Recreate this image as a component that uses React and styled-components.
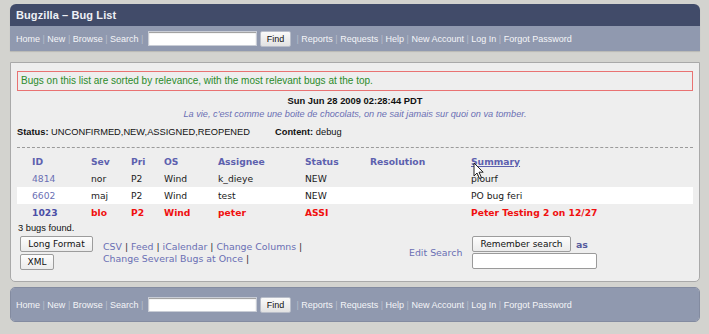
import React from 'react'
import styled, { createGlobalStyle } from 'styled-components'

const Global = createGlobalStyle`
  body {
    margin: 0;
    background: #d3d3cf;
    font-family: "Liberation Sans", Arial, sans-serif;
  }
`

const navLinks = ['Home', 'New', 'Browse', 'Search']
const navLinks2 = ['Reports', 'Requests', 'Help', 'New Account', 'Log In', 'Forgot Password']

const bugs = [
  { id: '4814', sev: 'nor', pri: 'P2', os: 'Wind', who: 'k_dieye', status: 'NEW', res: '', summary: 'piourf' },
  { id: '6602', sev: 'maj', pri: 'P2', os: 'Wind', who: 'test', status: 'NEW', res: '', summary: 'PO bug feri', even: true },
  { id: '1023', sev: 'blo', pri: 'P2', os: 'Wind', who: 'peter', status: 'ASSI', res: '', summary: 'Peter Testing 2 on 12/27', hot: true },
]

function Nav() {
  return (
    <NavBar>
      {navLinks.map((l, i) => (
        <React.Fragment key={l}>
          {i > 0 && <Sep>|</Sep>}
          <NavLink>{l}</NavLink>
        </React.Fragment>
      ))}
      <Sep>|</Sep>
      <QuickInput />
      <FindButton>Find</FindButton>
      {navLinks2.map(l => (
        <React.Fragment key={l}>
          <Sep>|</Sep>
          <NavLink>{l}</NavLink>
        </React.Fragment>
      ))}
    </NavBar>
  )
}

function Cursor() {
  return (
    <CursorIcon width="12" height="18" viewBox="0 0 12 18">
      <path d="M1 1 L1 14 L4 11 L6.5 16.5 L8.5 15.6 L6 10.2 L10.2 10.2 Z" fill="#fff" stroke="#222" strokeWidth="1" strokeLinejoin="round" />
    </CursorIcon>
  )
}

export default function App() {
  return (
    <Page>
      <Global />
      <Header>
        <TitleBar>Bugzilla – Bug List</TitleBar>
        <Nav />
      </Header>

      <Content>
        <Notice>Bugs on this list are sorted by relevance, with the most relevant bugs at the top.</Notice>
        <DateLine>Sun Jun 28 2009 02:28:44 PDT</DateLine>
        <Quote>La vie, c'est comme une boite de chocolats, on ne sait jamais sur quoi on va tomber.</Quote>
        <Criteria>
          <span><b>Status:</b> UNCONFIRMED,NEW,ASSIGNED,REOPENED</span>
          <span><b>Content:</b> debug</span>
        </Criteria>
        <Rule />

        <BugTable>
          <BugRow $head>
            <Cell>ID</Cell>
            <Cell>Sev</Cell>
            <Cell>Pri</Cell>
            <Cell>OS</Cell>
            <Cell>Assignee</Cell>
            <Cell>Status</Cell>
            <Cell>Resolution</Cell>
            <Cell><SortLink>Summary<Cursor /></SortLink></Cell>
          </BugRow>
          {bugs.map(b => (
            <BugRow key={b.id} $even={b.even} $hot={b.hot}>
              <IdCell $hot={b.hot}>{b.id}</IdCell>
              <Cell>{b.sev}</Cell>
              <Cell>{b.pri}</Cell>
              <Cell>{b.os}</Cell>
              <Cell>{b.who}</Cell>
              <Cell>{b.status}</Cell>
              <Cell>{b.res}</Cell>
              <Cell>{b.summary}</Cell>
            </BugRow>
          ))}
        </BugTable>
        <Count>3 bugs found.</Count>

        <Actions>
          <ButtonStack>
            <Btn $w="73px">Long Format</Btn>
            <Btn $w="34px">XML</Btn>
          </ButtonStack>
          <Formats>
            <div>
              <FLink>CSV</FLink> | <FLink>Feed</FLink> | <FLink>iCalendar</FLink> | <FLink>Change Columns</FLink> |
            </div>
            <div>
              <FLink>Change Several Bugs at Once</FLink> |
            </div>
          </Formats>
          <EditSearch>Edit Search</EditSearch>
          <Remember>
            <RememberTop>
              <Btn $w="99px">Remember search</Btn>
              <As>as</As>
            </RememberTop>
            <NameInput />
          </Remember>
        </Actions>
      </Content>

      <Footer>
        <Nav />
      </Footer>
    </Page>
  )
}

const Page = styled.div`
  padding: 4px 9px 0 10px;
`

const Header = styled.div`
  border-radius: 6px 6px 0 0;
  overflow: hidden;
  box-shadow: 0 1px 1px #b8b8b4;
`

const TitleBar = styled.div`
  height: 22px;
  background: #414b69;
  color: #eef0f5;
  font-weight: bold;
  font-size: 11px;
  line-height: 23px;
  padding-left: 6px;
  letter-spacing: 0.1px;
`

const NavBar = styled.div`
  height: 25px;
  background: #9099af;
  display: flex;
  align-items: center;
  padding-left: 6px;
  font-size: 9px;
  color: #f2f3f6;
`

const NavLink = styled.span`
  color: #f4f5f8;
`

const Sep = styled.span`
  color: #b7bdcb;
  margin: 0 2.5px;
`

const QuickInput = styled.div`
  width: 107px;
  height: 13px;
  background: #fff;
  border: 1px solid #c9cdd6;
  box-shadow: inset 0 1px 1px #999;
  margin-left: 2px;
`

const FindButton = styled.div`
  height: 14px;
  width: 29px;
  margin-left: 3px;
  margin-right: 3px;
  background: linear-gradient(#fafafa, #e2e2e2);
  border: 1px solid #b8bdc9;
  border-radius: 2px;
  color: #111;
  font-size: 9px;
  line-height: 14px;
  text-align: center;
`

const Content = styled.div`
  margin-top: 11px;
  background: #eeeeee;
  border: 1px solid #a9a9a9;
  border-radius: 0 0 5px 5px;
  padding: 8px 6px 12px 6px;
  height: 198px;
`

const Notice = styled.div`
  border: 1px solid #e97272;
  color: #2a8b2a;
  font-size: 10px;
  padding: 4px 3px 4px 3px;
  height: 10px;
  line-height: 10px;
`

const DateLine = styled.div`
  text-align: center;
  font-weight: bold;
  font-size: 9.4px;
  color: #111;
  margin-top: 4px;
`

const Quote = styled.div`
  text-align: center;
  font-style: italic;
  font-size: 9.2px;
  color: #6a6fb4;
  margin-top: 3px;
`

const Criteria = styled.div`
  display: flex;
  margin-top: 8px;
  font-size: 9.3px;
  color: #111;
  span:first-child { width: 258px; }
`

const Rule = styled.div`
  border-top: 1px dashed #9a9a9a;
  margin-top: 10px;
`

const BugTable = styled.div`
  margin-top: 4px;
  font-family: "DejaVu Sans", Verdana, sans-serif;
  font-size: 9.2px;
`

const BugRow = styled.div`
  display: grid;
  grid-template-columns: 59px 40px 33px 54px 87px 65px 101px 1fr;
  padding-left: 15px;
  height: ${p => (p.$head ? '18px' : '17px')};
  align-items: center;
  background: ${p => (p.$even ? '#ffffff' : 'transparent')};
  color: ${p => (p.$head ? '#5d61ae' : p.$hot ? '#f01010' : '#1a1a1a')};
  font-weight: ${p => (p.$head || p.$hot ? 'bold' : 'normal')};
`

const Cell = styled.div`
  white-space: nowrap;
`

const IdCell = styled(Cell)`
  color: ${p => (p.$hot ? '#4b4fa6' : '#6a6fb4')};
`

const SortLink = styled.span`
  position: relative;
  text-decoration: underline;
`

const CursorIcon = styled.svg`
  position: absolute;
  left: 2px;
  top: 6px;
`

const Count = styled.div`
  font-size: 9.3px;
  color: #111;
  margin-top: 2px;
  padding-left: 1px;
`

const Actions = styled.div`
  display: flex;
  align-items: flex-start;
  margin-top: 3px;
  padding-left: 3px;
`

const ButtonStack = styled.div`
  display: flex;
  flex-direction: column;
  align-items: flex-start;
  gap: 2px;
`

const Btn = styled.div`
  box-sizing: border-box;
  width: ${p => p.$w};
  background: linear-gradient(#fdfdfd, #ebebeb);
  border: 1px solid #9c9c9c;
  border-radius: 2px;
  height: 16px;
  line-height: 14px;
  text-align: center;
  font-family: "DejaVu Sans", Verdana, sans-serif;
  font-size: 9px;
  color: #111;
`

const Formats = styled.div`
  margin-left: 10px;
  margin-top: 5px;
  font-family: "DejaVu Sans", Verdana, sans-serif;
  font-size: 9.4px;
  line-height: 12px;
  color: #333;
  width: 306px;
`

const FLink = styled.span`
  color: #6a6fb4;
`

const EditSearch = styled.div`
  font-family: "DejaVu Sans", Verdana, sans-serif;
  font-size: 9.4px;
  color: #6a6fb4;
  margin-top: 11px;
  width: 63px;
`

const Remember = styled.div`
  display: flex;
  flex-direction: column;
  gap: 1px;
`

const RememberTop = styled.div`
  display: flex;
  align-items: center;
`

const As = styled.span`
  font-family: "DejaVu Sans", Verdana, sans-serif;
  font-size: 9.4px;
  color: #555a9c;
  margin-left: 5px;
  font-weight: bold;
`

const NameInput = styled.div`
  box-sizing: border-box;
  width: 125px;
  height: 16px;
  background: #fff;
  border: 1px solid #9a9a9a;
  border-radius: 2px;
`

const Footer = styled.div`
  margin-top: 5px;
  border-radius: 5px;
  overflow: hidden;
  border: 1px solid #838ba0;
  & > div {
    height: 33px;
    padding-left: 5px;
  }
`
